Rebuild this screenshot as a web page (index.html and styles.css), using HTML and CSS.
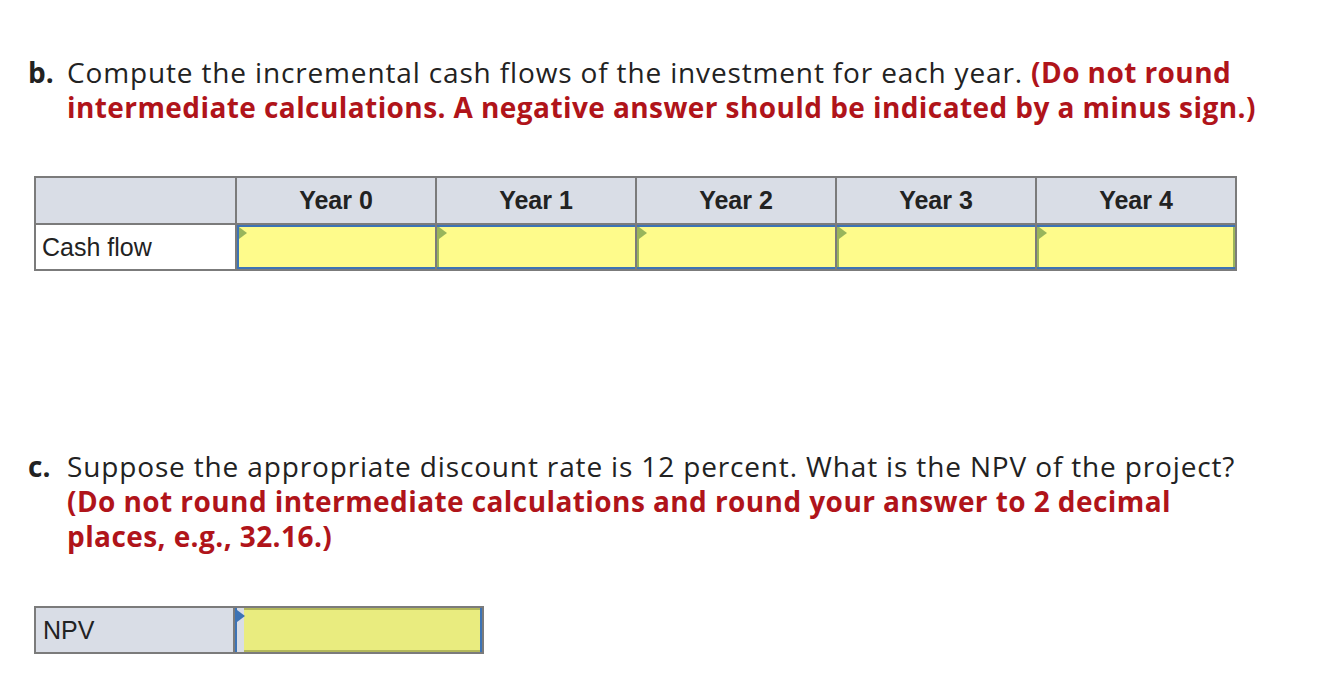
FILE: index.html
```html
<!DOCTYPE html>
<html>
<head>
<meta charset="utf-8">
<link rel="stylesheet" href="styles.css">
</head>
<body>
<div class="page">
  <div class="q q-b">
    <span class="lbl">b.</span>
    <p class="qtext">Compute the incremental cash flows of the investment for each year. <strong class="hint">(Do not round<br>intermediate calculations. A negative answer should be indicated by a minus sign.)</strong></p>
  </div>

  <table class="grid">
    <tr class="head">
      <th class="rowlbl"></th>
      <th>Year 0</th>
      <th>Year 1</th>
      <th>Year 2</th>
      <th>Year 3</th>
      <th>Year 4</th>
    </tr>
    <tr>
      <td class="rowlbl body">Cash flow</td>
      <td class="inp first"><span class="flag"></span></td>
      <td class="inp"><span class="flag"></span></td>
      <td class="inp"><span class="flag"></span></td>
      <td class="inp"><span class="flag"></span></td>
      <td class="inp"><span class="flag"></span></td>
    </tr>
  </table>

  <div class="q q-c">
    <span class="lbl">c.</span>
    <p class="qtext">Suppose the appropriate discount rate is 12 percent. What is the NPV of the project?<br><strong class="hint">(Do not round intermediate calculations and round your answer to 2 decimal<br>places, e.g., 32.16.)</strong></p>
  </div>

  <div class="npv">
    <div class="npv-lbl">NPV</div>
    <div class="npv-inp"><span class="flag blue"></span><span class="fill"></span></div>
  </div>
</div>
</body>
</html>
```
FILE: styles.css
```css
* { box-sizing: border-box; }
body {
  margin: 0;
  background: #fff;
  font-family: "Open Sans", "Liberation Sans", sans-serif;
  color: #222;
}
.page {
  padding: 55px 0 0 28px;
}
.q {
  display: flex;
  align-items: flex-start;
  width: 1300px;
}
.lbl {
  width: 39px;
  flex: none;
  font-weight: 700;
  font-size: 28px;
  line-height: 35px;
}
.qtext {
  margin: 0;
  font-size: 28px;
  line-height: 35px;
  letter-spacing: 0.85px;
  white-space: nowrap;
  flex: 1;
}
.hint {
  color: #b0141a;
  font-weight: 700;
  letter-spacing: 0.42px;
}
.grid {
  border-collapse: collapse;
  margin: 51px 0 0 6px;
  font-family: "Liberation Sans", Arial, sans-serif;
}
.grid th, .grid td {
  border: 2px solid #7b7b7b;
  padding: 0;
}
.grid th {
  background: #d9dde6;
  height: 47px;
  width: 200px;
  font-size: 25px;
  font-weight: 700;
  color: #222;
  text-align: center;
}
.grid th.rowlbl { width: 201px; }
.grid td { height: 46px; }
.grid td.body {
  font-size: 25px;
  color: #222;
  padding-left: 6px;
  background: #fff;
}
.grid td.inp {
  position: relative;
  background: #fefb8b;
  box-shadow: inset 0 2px 0 #3d73b5, inset 0 -2px 0 #3d73b5, inset 2px 0 0 #9bb45a;
}
.grid td.inp.first {
  box-shadow: inset 0 2px 0 #3d73b5, inset 0 -2px 0 #3d73b5, inset 2px 0 0 #3d73b5;
}
.grid td.inp:last-child {
  box-shadow: inset 0 2px 0 #3d73b5, inset 0 -2px 0 #3d73b5, inset 2px 0 0 #9bb45a, inset -2px 0 0 #9bb45a;
}
.flag {
  position: absolute;
  left: 2px;
  top: 2px;
  width: 0;
  height: 0;
  border-top: 6px solid transparent;
  border-bottom: 6px solid transparent;
  border-left: 8px solid #98b45c;
}
.flag.blue { border-left-color: #3d73b5; top: 2px; }
.q-c { margin-top: 178px; }
.npv {
  display: flex;
  margin: 52px 0 0 6px;
  height: 48px;
}
.npv-lbl {
  width: 201px;
  background: #d9dde6;
  border: 2px solid #7b7b7b;
  font-family: "Liberation Sans", Arial, sans-serif;
  font-size: 25px;
  color: #222;
  padding: 8px 0 0 7px;
}
.npv-inp {
  position: relative;
  width: 249px;
  border: 2px solid #7b7b7b;
  border-left: 0;
  display: flex;
  background: #d9dde6;
  box-shadow: inset 2px 0 0 #3d73b5, inset -2px 0 0 #3d73b5;
  padding: 0 2px 0 9px;
}
.fill {
  flex: 1;
  background: #e9ec7f;
  border-top: 2px solid #b3b85a;
  border-bottom: 2px solid #b3b85a;
}
```
